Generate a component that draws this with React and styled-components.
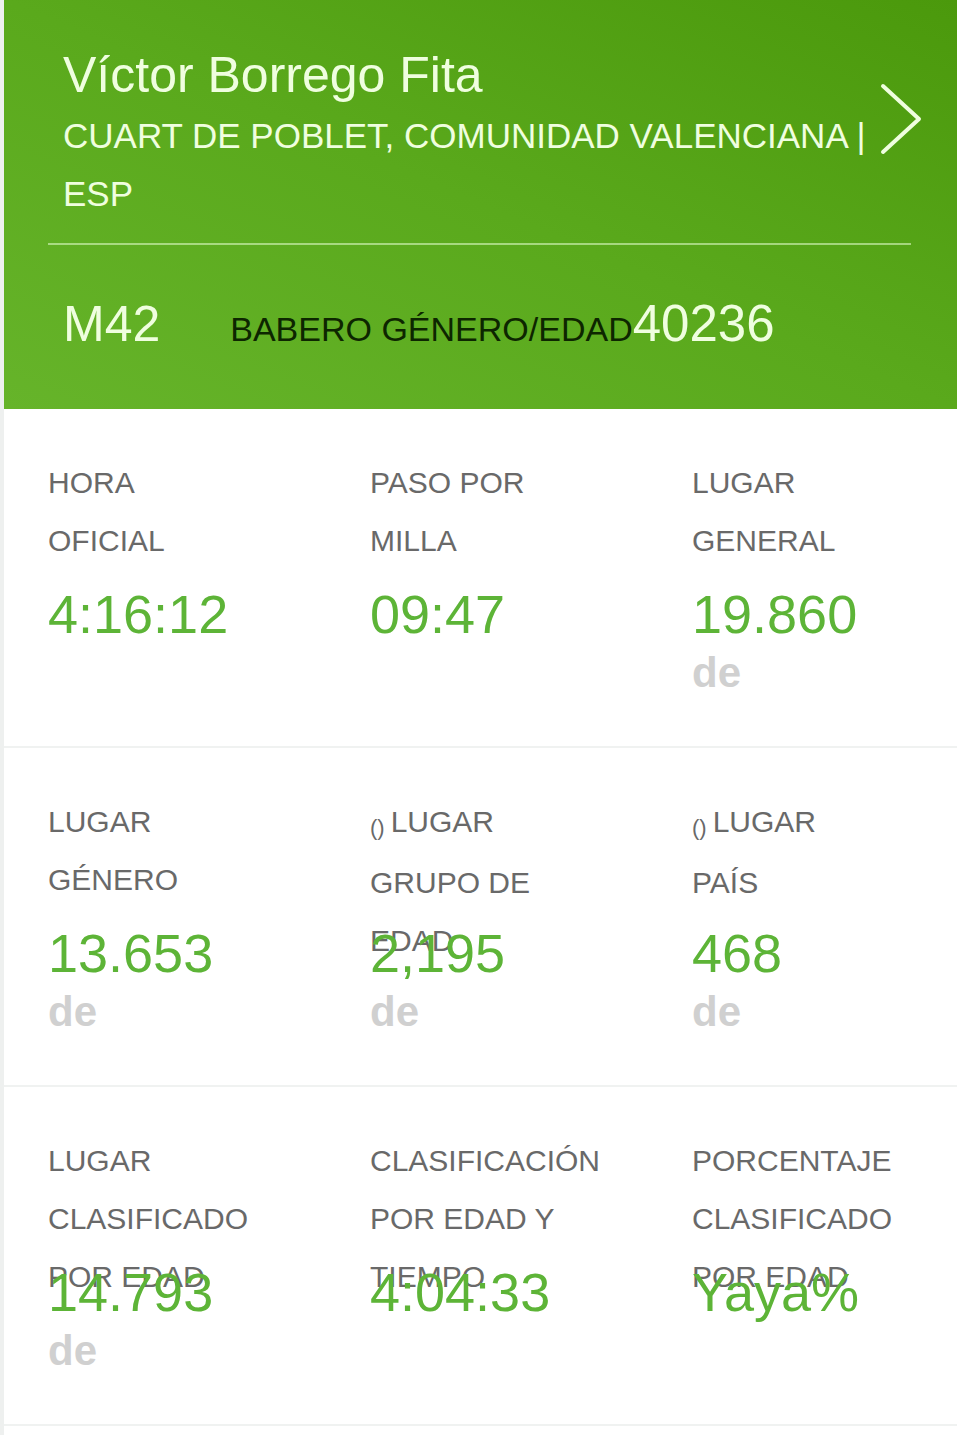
import styled, { createGlobalStyle } from 'styled-components';

const GlobalStyle = createGlobalStyle`
    html, body {
        margin: 0;
        padding: 0;
        background: #eef0ef;
        font-family: "Liberation Sans", Arial, sans-serif;
    }
`;

const Page = styled.div`
    margin-left: 4px;
    min-height: 1435px;
    background: #ffffff;
`;

const Header = styled.div`
    padding: 0 32px 0 44px;
    background: linear-gradient(to top right, #66b42a 0%, #5aa91c 50%, #4b990c 100%);
    color: #effedf;
`;

const HeaderTop = styled.div`
    display: flex;
    align-items: flex-start;
`;

const Info = styled.div`
    flex: 1;
    padding-left: 15px;
    padding-top: 45px;
`;

const Name = styled.div`
    font-size: 50px;
    line-height: 60px;
`;

const Location = styled.div`
    margin-top: 2px;
    font-size: 35px;
    line-height: 58px;
    text-transform: uppercase;
`;

const Chevron = styled.div`
    margin-top: 82px;
    width: 46px;
    height: 74px;
`;

const Divider = styled.div`
    height: 2px;
    margin: 20px 14px 0 0;
    background: rgba(230, 255, 210, 0.55);
`;

const BibRow = styled.div`
    display: flex;
    align-items: baseline;
    padding: 54px 0 60px 15px;
`;

const Division = styled.span`
    font-size: 50px;
    line-height: 49px;
    margin-right: 70px;
`;

const BibLabel = styled.span`
    font-size: 34px;
    color: #0d2600;
`;

const BibNumber = styled.span`
    font-size: 51px;
    line-height: 49px;
`;

const StatRow = styled.div`
    display: grid;
    grid-template-columns: 322px 322px 1fr;
    padding: 45px 0 44px 44px;
    border-bottom: 2px solid #f0f2f1;
`;

const Stat = styled.div`
    display: flex;
    flex-direction: column;
`;

const Label = styled.div`
    width: 192px;
    height: 116px;
    font-size: 30px;
    line-height: 58px;
    color: #696969;
`;

const Paren = styled.span`
    display: inline-block;
    font-size: 22px;
    margin-right: 6px;
    transform: translateY(3px);
`;

const Value = styled.div`
    margin-top: 14px;
    font-size: 54px;
    line-height: 60px;
    color: #5db437;
`;

const Of = styled.div`
    font-size: 42px;
    line-height: 58px;
    font-weight: 700;
    color: #d0d0d0;
`;

const rows = [
    [
        { label: 'HORA OFICIAL', value: '4:16:12' },
        { label: 'PASO POR MILLA', value: '09:47' },
        { label: 'LUGAR GENERAL', value: '19.860', of: true },
    ],
    [
        { label: 'LUGAR GÉNERO', value: '13.653', of: true },
        { label: 'LUGAR GRUPO DE EDAD', paren: true, value: '2,195', of: true },
        { label: 'LUGAR PAÍS', paren: true, value: '468', of: true },
    ],
    [
        { label: 'LUGAR CLASIFICADO POR EDAD', value: '14.793', of: true },
        { label: 'CLASIFICACIÓN POR EDAD Y TIEMPO', value: '4:04:33' },
        { label: 'PORCENTAJE CLASIFICADO POR EDAD', value: 'Yaya%' },
    ],
];

function StatCell({ label, paren, value, of }) {
    return (
        <Stat>
            <Label>
                {paren && <Paren>()</Paren>}
                {label}
            </Label>
            <Value>{value}</Value>
            {of && <Of>de</Of>}
        </Stat>
    );
}

export default function App() {
    return (
        <>
            <GlobalStyle />
            <Page>
                <Header>
                    <HeaderTop>
                        <Info>
                            <Name>Víctor Borrego Fita</Name>
                            <Location>CUART DE POBLET, COMUNIDAD VALENCIANA | ESP</Location>
                        </Info>
                        <Chevron>
                            <svg width="46" height="74" viewBox="0 0 46 74" fill="none">
                                <path d="M4 4 L40 37 L4 70" stroke="#effedf" strokeWidth="4" strokeLinecap="round" strokeLinejoin="round" />
                            </svg>
                        </Chevron>
                    </HeaderTop>
                    <Divider />
                    <BibRow>
                        <Division>M42</Division>
                        <BibLabel>BABERO GÉNERO/EDAD</BibLabel>
                        <BibNumber>40236</BibNumber>
                    </BibRow>
                </Header>
                {rows.map((row, i) => (
                    <StatRow key={i}>
                        {row.map((s, j) => (
                            <StatCell key={j} {...s} />
                        ))}
                    </StatRow>
                ))}
            </Page>
        </>
    );
}
